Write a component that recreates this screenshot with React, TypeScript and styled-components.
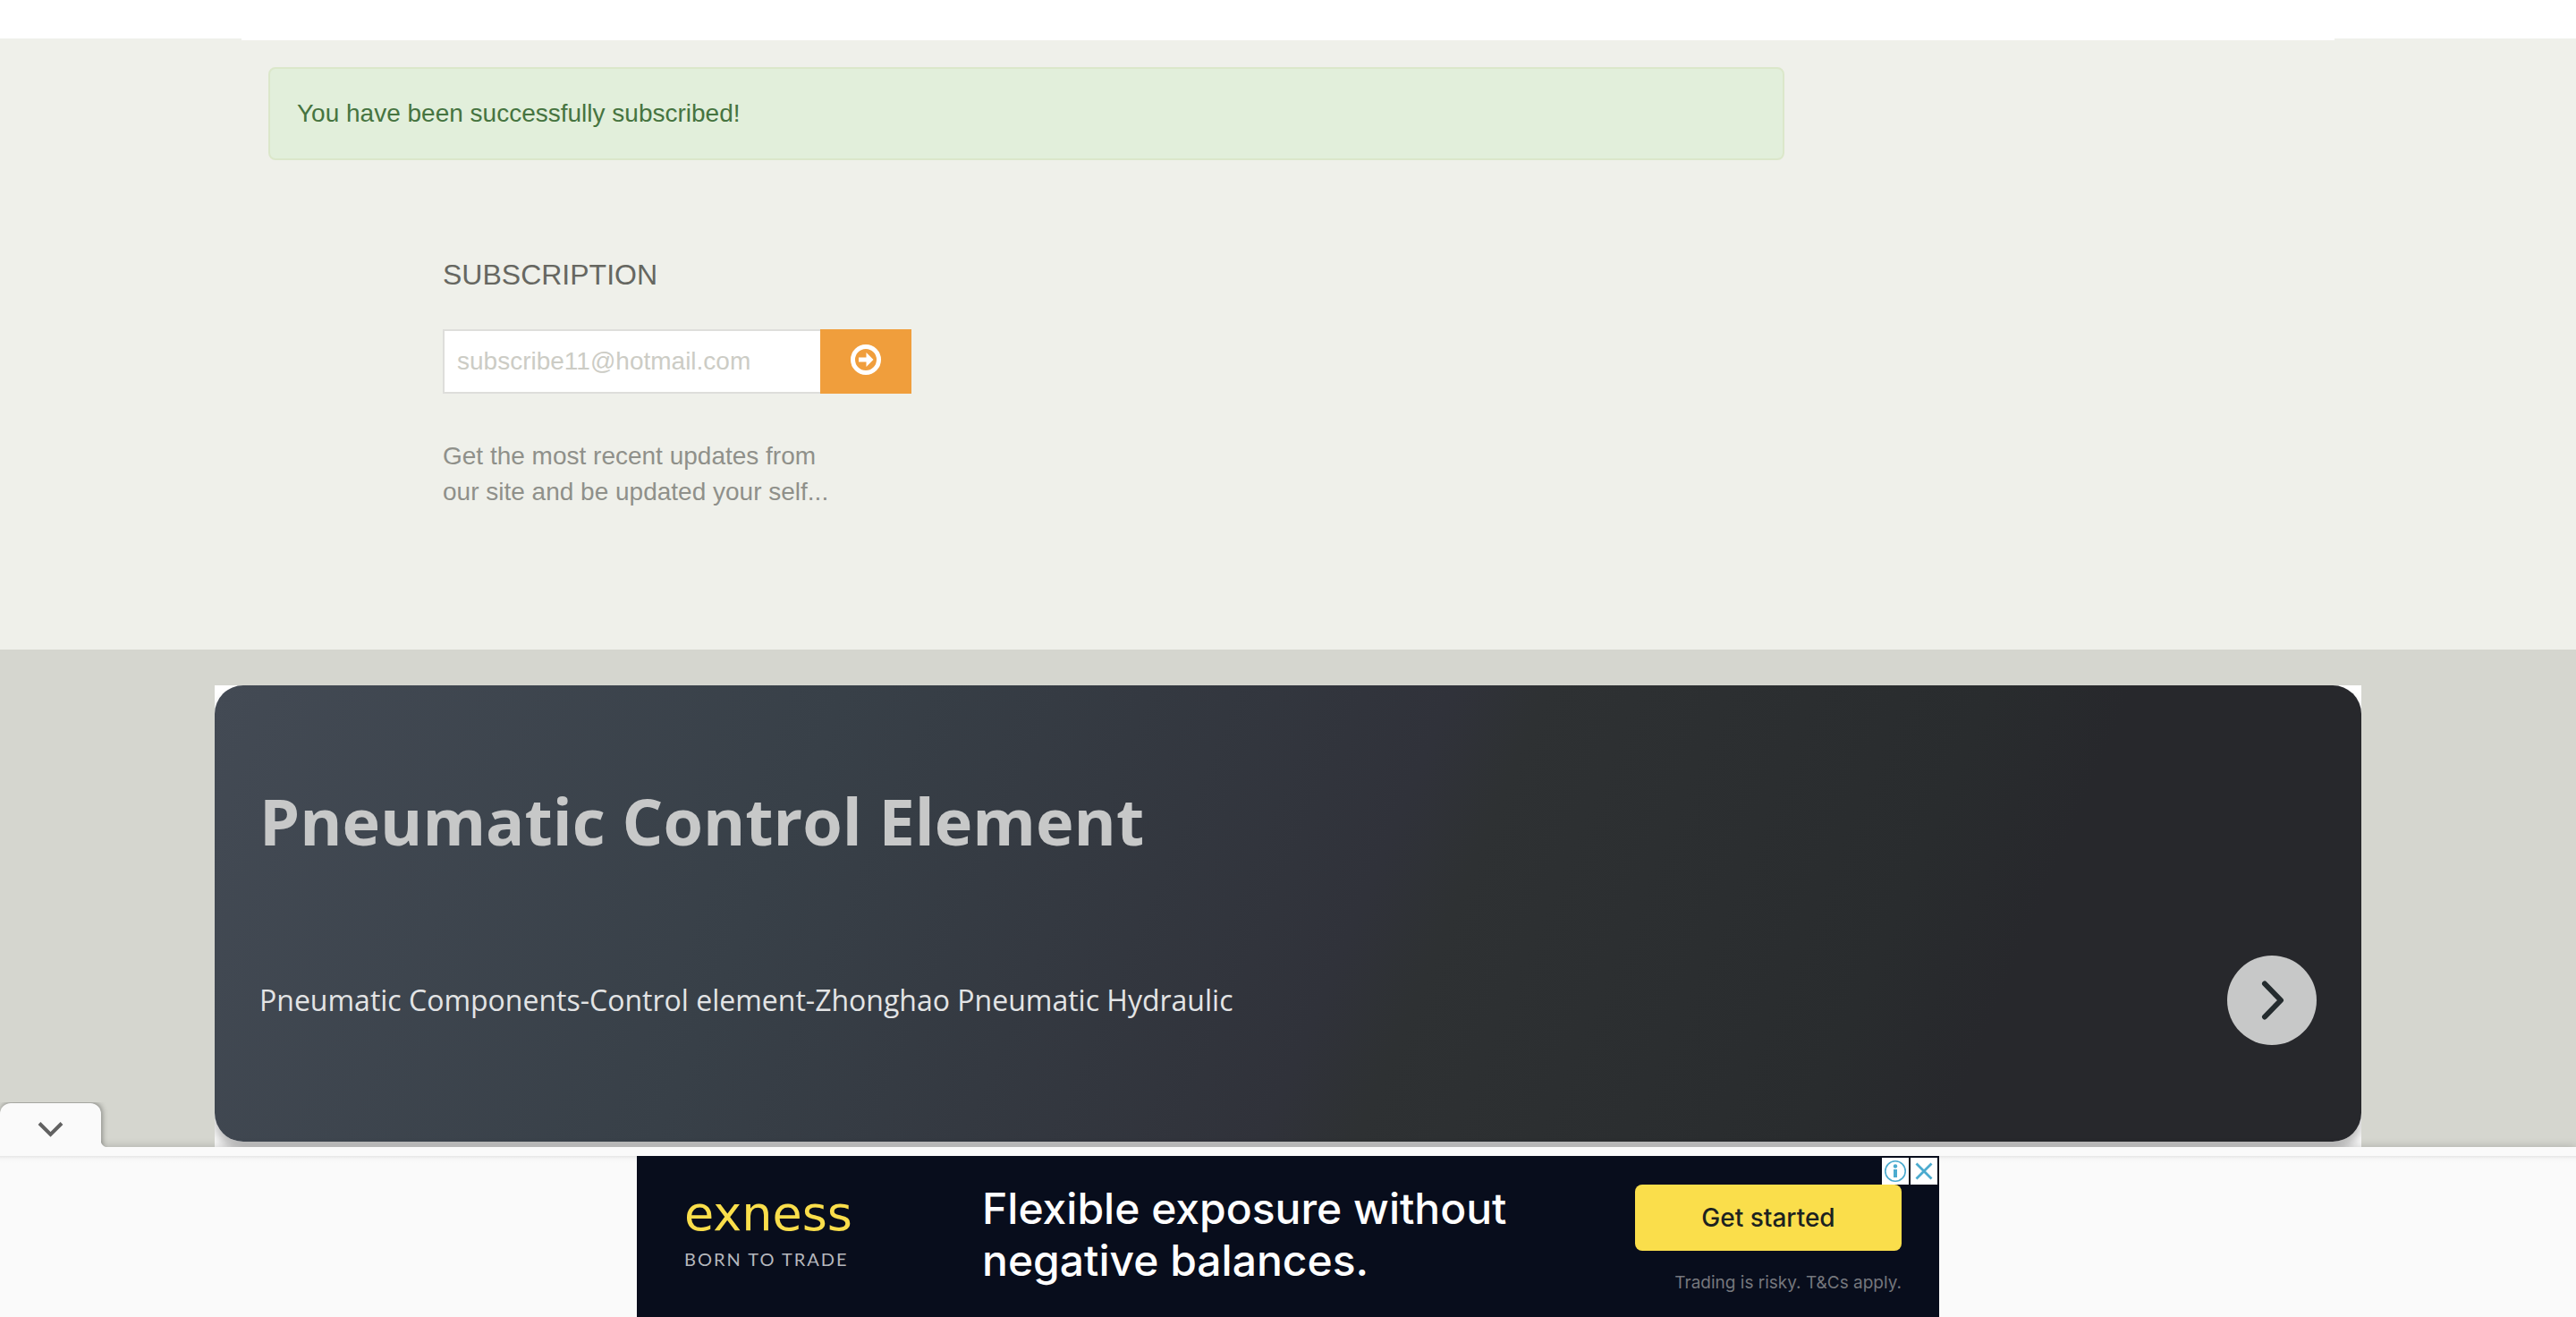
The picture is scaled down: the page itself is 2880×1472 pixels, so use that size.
import React from "react";
import styled, { createGlobalStyle } from "styled-components";

const GlobalStyle = createGlobalStyle`
  *, *::before, *::after { box-sizing: border-box; }
  html { overflow: hidden; }
  body {
    margin: 0;
    background: #d5d6cf;
    font-family: "Liberation Sans", Arial, sans-serif;
    font-size: 28px;
    line-height: 40px;
  }
`;

const Header = styled.header`
  height: 43px;
  background: #fff;
`;

const Main = styled.main`
  background: #eff0ea;
  padding-bottom: 156px;
`;

const Container = styled.div`
  max-width: 2340px;
  margin: 0 auto;
  border-top: 2px solid #fff;
  padding-top: 30px;
  display: grid;
  grid-template-columns: repeat(12, 1fr);
`;

const Alert = styled.p`
  grid-column: 1 / span 9;
  margin: 0 30px;
  padding: 30px;
  border: 2px solid #dbe7ca;
  border-radius: 8px;
  background: #e2efdb;
  color: #467440;
`;

const Subscription = styled.form`
  grid-column: 2 / span 6;
  margin: 108px 30px 0;
  display: flex;
  flex-direction: column;
  align-items: flex-start;
`;

const FormTitle = styled.label`
  font-size: 32px;
  color: #666761;
`;

const Field = styled.div`
  display: flex;
  width: 524px;
  height: 72px;
  margin: 41px 0 50px;
`;

const EmailInput = styled.input`
  flex: 1;
  min-width: 0;
  padding: 0 14px;
  border: 2px solid #dededb;
  border-right: 0;
  border-radius: 0;
  background: #fff;
  font: inherit;
  outline: 0;
  &::placeholder { color: #ccccc5; opacity: 1; }
`;

const SubmitButton = styled.button`
  display: grid;
  place-items: center;
  width: 102px;
  padding: 0 0 4px;
  border: 0;
  background: #f09e3c;
`;

const Note = styled.p`
  margin: 0;
  color: #8f908a;
`;

const Footer = styled.section`
  padding: 40px 0;
  background: #d5d6cf;
`;

const CardBackdrop = styled.div`
  max-width: 2400px;
  margin: 0 auto;
  background: #fff;
  overflow: hidden;
  padding-bottom: 30px;
`;

const Card = styled.article`
  display: grid;
  grid-template-columns: 1fr auto;
  align-items: center;
  padding: 97px 50px 108px;
  row-gap: 97px;
  border-radius: 32px;
  background: linear-gradient(
    113deg,
    #434a54 0%,
    #384048 27%,
    #30323a 53%,
    #2e3133 57%,
    #292c2e 76%,
    #27282c 82%
  );
  box-shadow: 0 10px 12px rgba(0, 0, 0, 0.27);
  font-family: "Open Sans", sans-serif;
`;

const CardTitle = styled.h2`
  grid-column: 1 / -1;
  margin: 0;
  color: #c7c8c8;
  font-size: 72px;
  font-weight: 700;
  line-height: 108px;
`;

const CardText = styled.p`
  margin: 0;
  color: #e3e4e5;
  font-size: 32px;
`;

const RoundButton = styled.button`
  display: grid;
  place-items: center;
  width: 100px;
  height: 100px;
  padding: 0;
  border: 0;
  border-radius: 50%;
  background: #c7c8c8;
`;

const Anchor = styled.aside`
  position: fixed;
  left: 0;
  right: 0;
  bottom: 0;
  height: 190px;
  padding-top: 10px;
  display: flex;
  justify-content: center;
  background: #fafafa;
  box-shadow: 0 0 10px rgba(0, 0, 0, 0.2);
`;

const Seam = styled.div`
  position: absolute;
  inset: 10px 0 auto;
  height: 8px;
  background: linear-gradient(#e6e6e6, #f6f6f6 40%, #fafafa);
`;

const CollapseTab = styled.button`
  position: absolute;
  left: 0;
  bottom: 180px;
  display: grid;
  place-items: center;
  width: 113px;
  height: 59px;
  padding: 0 0 2px;
  border: 0;
  border-radius: 12px 12px 0 0;
  background: #fafafa;
  box-shadow: 1px -1px 6px rgba(0, 0, 0, 0.4);
  clip-path: inset(-1px -10px 10px 0);

  &::after {
    content: "";
    position: absolute;
    left: 100%;
    bottom: 10px;
    width: 8px;
    height: 8px;
    background: radial-gradient(circle at 100% 0, transparent 8px, #fafafa 9px);
  }
`;

const Ad = styled.section`
  position: relative;
  display: flex;
  width: 1456px;
  background: #080d1c;
  font-family: Inter, sans-serif;
`;

const Brand = styled.div`
  width: 386px;
  padding: 35px 0 0 53px;
`;

const BrandName = styled.div`
  color: #fade4b;
  font-family: "DejaVu Sans", sans-serif;
  font-size: 54px;
  line-height: 60px;
`;

const Tagline = styled.div`
  padding-top: 4px;
  color: #b5b7bd;
  font-family: Lato, sans-serif;
  font-size: 20px;
  line-height: 32px;
  letter-spacing: 2px;
`;

const Headline = styled.p`
  flex: 1;
  margin: 0;
  padding-top: 30px;
  color: #fff;
  font-size: 48px;
  font-weight: 500;
  line-height: 58px;
  white-space: nowrap;
`;

const Action = styled.div`
  display: flex;
  flex-direction: column;
  align-items: flex-end;
  padding: 32px 42px 0 0;
`;

const AdButton = styled.button`
  width: 298px;
  height: 74px;
  padding: 0;
  border: 0;
  border-radius: 8px;
  background: #fade4b;
  color: #1c2220;
  font: 500 28px/40px Inter, sans-serif;
`;

const Legal = styled.small`
  padding-top: 16px;
  color: #75777d;
  font-size: 19px;
`;

const AdControls = styled.div`
  position: absolute;
  top: 2px;
  right: 2px;
  display: flex;
  gap: 2px;
`;

const AdControl = styled.button`
  display: grid;
  place-items: center;
  width: 30px;
  height: 30px;
  padding: 0;
  border: 0;
  background: #fff;
`;

export default function App() {
  return (
    <>
      <GlobalStyle />
      <Header />
      <Main>
        <Container>
          <Alert role="status">You have been successfully subscribed!</Alert>
          <Subscription onSubmit={(e) => e.preventDefault()}>
            <FormTitle htmlFor="email">SUBSCRIPTION</FormTitle>
            <Field>
              <EmailInput id="email" type="email" placeholder="subscribe11@hotmail.com" />
              <SubmitButton type="submit" aria-label="Subscribe">
                <svg width="34" height="34" viewBox="0 0 34 34">
                  <circle cx="17" cy="17" r="14.5" fill="none" stroke="#fff" strokeWidth="5" />
                  <path d="M9 14.5H17.5V9L25.5 17L17.5 25V19.5H9Z" fill="#fff" />
                </svg>
              </SubmitButton>
            </Field>
            <Note>
              Get the most recent updates from
              <br />
              our site and be updated your self...
            </Note>
          </Subscription>
        </Container>
      </Main>
      <Footer>
        <CardBackdrop>
          <Card>
            <CardTitle>Pneumatic Control Element</CardTitle>
            <CardText>Pneumatic Components-Control element-Zhonghao Pneumatic Hydraulic</CardText>
            <RoundButton aria-label="Open">
              <svg width="100" height="100" viewBox="0 0 100 100">
                <path d="M42 31.5L60 50L42 68.5" fill="none" stroke="#242b2e" strokeWidth="6" strokeLinecap="round" strokeLinejoin="round" />
              </svg>
            </RoundButton>
          </Card>
        </CardBackdrop>
      </Footer>
      <Anchor>
        <Seam />
        <CollapseTab aria-label="Collapse">
          <svg width="32" height="20" viewBox="0 0 32 20">
            <path d="M3 3.5L15.5 16L28 3.5" fill="none" stroke="#616161" strokeWidth="4" />
          </svg>
        </CollapseTab>
        <Ad>
          <Brand>
            <BrandName>exness</BrandName>
            <Tagline>BORN TO TRADE</Tagline>
          </Brand>
          <Headline>
            Flexible exposure without
            <br />
            negative balances.
          </Headline>
          <Action>
            <AdButton>Get started</AdButton>
            <Legal>Trading is risky. T&amp;Cs apply.</Legal>
          </Action>
          <AdControls>
            <AdControl aria-label="About this ad">
              <svg width="30" height="30" viewBox="0 0 30 30" fill="#4babcf">
                <circle cx="15" cy="15" r="11.2" fill="none" stroke="#4babcf" strokeWidth="1.6" />
                <circle cx="15" cy="9.5" r="2.2" />
                <rect x="13" y="13" width="4" height="9" />
              </svg>
            </AdControl>
            <AdControl aria-label="Close ad">
              <svg width="30" height="30" viewBox="0 0 30 30">
                <path d="M6.5 6.5L23.5 23.5M23.5 6.5L6.5 23.5" stroke="#4babcf" strokeWidth="2.8" />
              </svg>
            </AdControl>
          </AdControls>
        </Ad>
      </Anchor>
    </>
  );
}
